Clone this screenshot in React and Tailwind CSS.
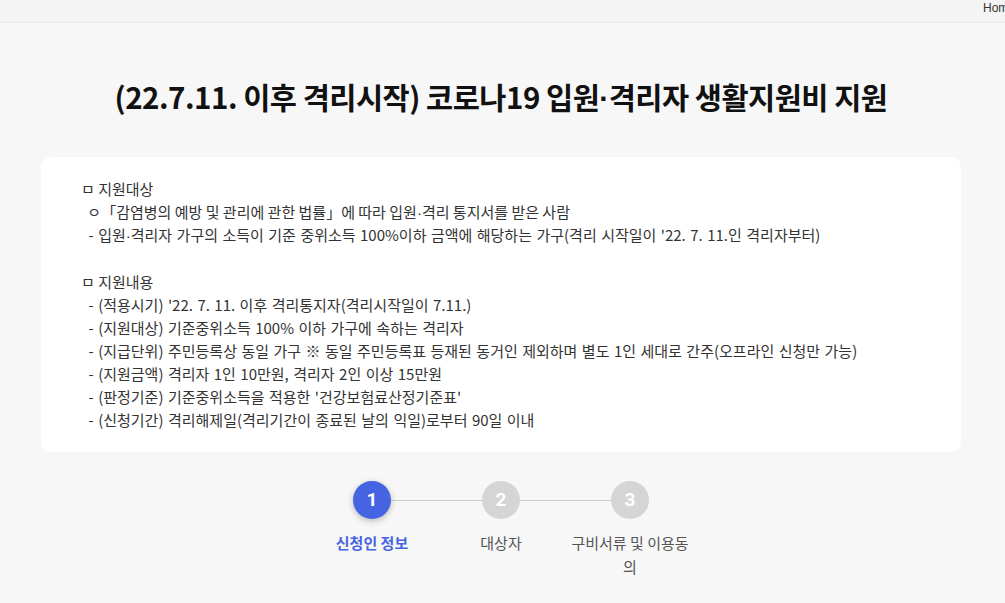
const Dot = () => (
  <span className="leading-[0]" style={{ fontFamily: '"Liberation Sans", Arial, sans-serif' }}>·</span>
);

function withDots(text) {
  const parts = text.split("·");
  const out = [];
  parts.forEach((p, i) => {
    if (i > 0) out.push(<Dot key={"d" + i} />);
    out.push(p);
  });
  return out;
}

export default function App() {
  const font = { fontFamily: '"Noto Sans CJK KR", "Noto Sans", sans-serif' };
  const lines1 = [
    { t: "ㅁ 지원대상", ws: false, head: true },
    { t: " ㅇ「감염병의 예방 및 관리에 관한 법률」에 따라 입원·격리 통지서를 받은 사람", ws: false },
    { t: " - 입원·격리자 가구의 소득이 기준 중위소득 100%이하 금액에 해당하는 가구(격리 시작일이 '22. 7. 11.인 격리자부터)", ws: true },
  ];
  const lines2 = [
    { t: "ㅁ 지원내용", ws: false, head: true },
    { t: " - (적용시기) '22. 7. 11. 이후 격리통지자(격리시작일이 7.11.)", ws: true },
    { t: " - (지원대상) 기준중위소득 100% 이하 가구에 속하는 격리자", ws: true },
    { t: " - (지급단위) 주민등록상 동일 가구 ※ 동일 주민등록표 등재된 동거인 제외하며 별도 1인 세대로 간주(오프라인 신청만 가능)", ws: true },
    { t: " - (지원금액) 격리자 1인 10만원, 격리자 2인 이상 15만원", ws: true },
    { t: " - (판정기준) 기준중위소득을 적용한 '건강보험료산정기준표'", ws: true },
    { t: " - (신청기간) 격리해제일(격리기간이 종료된 날의 익일)로부터 90일 이내", ws: true },
  ];
  const steps = [
    { n: 1, label: "신청인 정보", active: true },
    { n: 2, label: "대상자" },
    { n: 3, label: "구비서류 및 이용동의" },
  ];
  const Line = ({ l }) => (
    <div className={(l.ws ? "[word-spacing:1.1px]" : "") + (l.head ? " -ml-[3px]" : "")}>{withDots(l.t)}</div>
  );
  return (
    <div className="w-[1005px] h-[603px] bg-[#f7f7f7] overflow-hidden" style={font}>
      <div className="h-[23px] bg-[#f5f4f4] border-b border-[#e6e6e6] flex overflow-hidden">
        <span
          className="text-[12px] leading-[16px] text-[#333] whitespace-nowrap pl-[983px]"
          style={{ fontFamily: '"Liberation Sans", Arial, sans-serif' }}
        >
          Home
        </span>
      </div>
      <div className="w-[1002px]">
        <h1 className="mt-[50px] text-center text-[29.5px] leading-[46px] font-bold text-[#111] tracking-[-0.5px]">
          (22.7.11. 이후 격리시작) 코로나19 입원{<Dot />}격리자 생활지원비 지원
        </h1>
        <div className="ml-[41px] w-[920px] mt-[38px] bg-white rounded-[10px] pl-[43px] pr-[20px] pt-[20px] pb-[21px] text-[15px] leading-[23px] text-[#333] whitespace-pre">
          {lines1.map((l, i) => (
            <Line key={i} l={l} />
          ))}
          <div className="h-[24px]" />
          {lines2.map((l, i) => (
            <Line key={i} l={l} />
          ))}
        </div>
        <div className="mt-[29px] flex justify-center">
          {steps.map((s, i) => (
            <div key={s.n} className="w-[129px] flex flex-col items-center relative">
              {i > 0 && <div className="absolute top-[19px] right-[50%] w-[129px] h-px bg-[#cccccc]" />}
              <div
                className={
                  "relative z-10 w-[38px] h-[38px] rounded-full flex items-center justify-center text-white text-[19px] font-bold " +
                  (s.active ? "bg-[#4664e2] shadow-[0_2px_6px_rgba(0,0,0,0.25)]" : "bg-[#d5d5d5]")
                }
                style={{ fontFamily: 'Roboto, "Noto Sans", sans-serif' }}
              >
                {s.n}
              </div>
              <div
                className={
                  "mt-[12px] w-[124px] text-center text-[15px] leading-[24px] " +
                  (s.active ? "text-[#4664e2] font-bold" : "text-[#555]")
                }
              >
                {s.label}
              </div>
            </div>
          ))}
        </div>
      </div>
    </div>
  );
}
